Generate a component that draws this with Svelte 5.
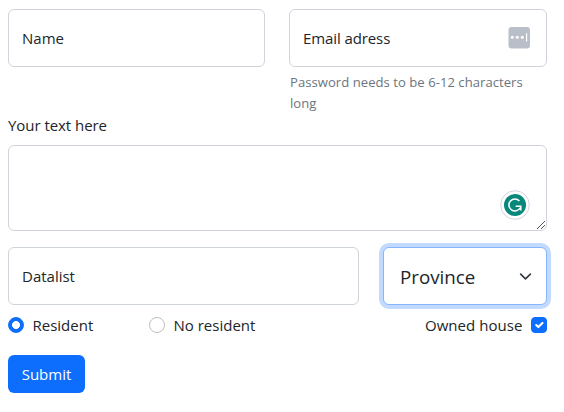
<script>
  let choice = $state('resident');
  let owned = $state(true);
</script>

<form onsubmit={(e) => e.preventDefault()}>
  <div class="row halves">
    <div class="column">
      <div class="field"><span>Name</span></div>
    </div>
    <div class="column">
      <div class="field email">
        <span class="t-email">Email adress</span>
        <svg class="key" width="22" height="22" viewBox="0 0 22 22" aria-hidden="true">
          <rect x="0.5" width="21.5" height="21.5" rx="3.2" fill="#b8bfc9" />
          <circle cx="4.3" cy="10.3" r="1.5" fill="#fff" />
          <circle cx="9.3" cy="10.3" r="1.5" fill="#fff" />
          <circle cx="14.3" cy="10.3" r="1.5" fill="#fff" />
          <path d="M18.6 6.3v8.2" stroke="#fff" stroke-width="1.2" />
        </svg>
      </div>
      <p class="help">Password needs to be 6-12 characters long</p>
    </div>
  </div>

  <div class="label"><span class="t-your">Your text here</span></div>
  <div class="area">
    <svg class="badge" width="30" height="30" viewBox="0 0 30 30" aria-hidden="true">
      <circle cx="15" cy="15" r="14.3" fill="#fff" stroke="#d2d5e0" />
      <circle cx="15" cy="15" r="11" fill="#07887a" />
      <path d="M19.4 10.9A6 6 0 1 0 20.2 17.8M15.6 16.3h5M20.8 15.6v5" fill="none" stroke="#fff" stroke-width="1.5" />
    </svg>
    <svg class="grip" width="10" height="10" viewBox="0 0 10 10" aria-hidden="true">
      <path d="M1 9L9 1M5 9L9 5" stroke="#555" stroke-width="1" fill="none" />
    </svg>
  </div>

  <div class="row choose">
    <div class="field datalist"><span>Datalist</span></div>
    <div class="field select">
      <span class="t-prov">Province</span>
      <svg width="13" height="13" viewBox="0 0 16 16" aria-hidden="true">
        <path d="m2 5 6 6 6-6" fill="none" stroke="#343a40" stroke-width="2" stroke-linecap="round" stroke-linejoin="round" />
      </svg>
    </div>
  </div>

  <div class="checks">
    <label class="first"><input type="radio" value="resident" bind:group={choice} /><span>Resident</span></label>
    <label><input type="radio" value="none" bind:group={choice} /><span>No resident</span></label>
    <label class="owned"><span class="t-owned">Owned house</span><input type="checkbox" bind:checked={owned} /></label>
  </div>

  <button type="submit"><span>Submit</span></button>
</form>

<style>
  :global(body) { background: #fff; }
  form {
    box-sizing: border-box;
    width: 564px;
    height: 412px;
    padding: 9px 17px 0 8px;
    font: 15px/24px "Open Sans", "Noto Sans", sans-serif;
    color: #212529;
  }
  form * { box-sizing: border-box; }
  span { white-space: nowrap; }
  .row { display: flex; gap: 24px; }
  .column:first-child { width: 257px; }
  .column:last-child { width: 258px; }
  .field {
    display: flex;
    align-items: center;
    height: 58px;
    padding: 0 13px;
    border: 1px solid #ced4da;
    border-radius: 6px;
    background: #fff;
  }
  .email { justify-content: space-between; padding: 0 16px 0 13px; }
  .t-email { letter-spacing: -0.1px; }
  .t-your { letter-spacing: -0.05px; }
  .t-owned { letter-spacing: 0.05px; }
  .help { margin: 5px 0 -1px; font-size: 13.1px; line-height: 21px; letter-spacing: 0.03px; color: #6c757d; padding-left: 1px; }
  .label { height: 24px; margin-bottom: 8px; }
  .area {
    position: relative;
    height: 86px;
    margin-bottom: 16px;
    border: 1px solid #ced4da;
    border-radius: 6px;
  }
  .badge { position: absolute; right: 16px; bottom: 10px; }
  .grip { position: absolute; right: 0; bottom: 0; }
  .datalist { width: 351px; }
  .select {
    width: 164px;
    padding: 0 14px 0 16px;
    justify-content: space-between;
    border-color: #86b7fe;
    box-shadow: 0 0 0 4px #c2daff;
    font-size: 18.75px;
  }
  .t-prov { padding-top: 2px; }
  .checks { display: flex; height: 24px; margin-top: 8px; }
  label { display: flex; align-items: center; gap: 8.5px; }
  .first { width: 141px; }
  .owned { margin-left: auto; }
  input {
    appearance: none;
    width: 16px;
    height: 16px;
    margin: 0;
    border: 1px solid #bfbfbf;
    border-radius: 50%;
    background: #fff;
  }
  input[type='radio']:checked {
    border-color: #0d6efd;
    background: radial-gradient(circle, #fff 3.6px, #0d6efd 4.3px);
  }
  input[type='checkbox'] { border-radius: 4px; }
  input[type='checkbox']:checked {
    border-color: #0d6efd;
    background: #0d6efd url("data:image/svg+xml,%3csvg xmlns='http://www.w3.org/2000/svg' viewBox='0 0 20 20'%3e%3cpath fill='none' stroke='%23fff' stroke-linecap='round' stroke-linejoin='round' stroke-width='3' d='m6 10 3 3 6-6'/%3e%3c/svg%3e") center / 14px;
  }
  button {
    display: flex;
    align-items: center;
    justify-content: center;
    width: 77px;
    height: 38px;
    margin-top: 18px;
    padding: 0;
    border: 0;
    border-radius: 6px;
    background: #0d6efd;
    color: #fff;
    font: inherit;
  }
</style>
